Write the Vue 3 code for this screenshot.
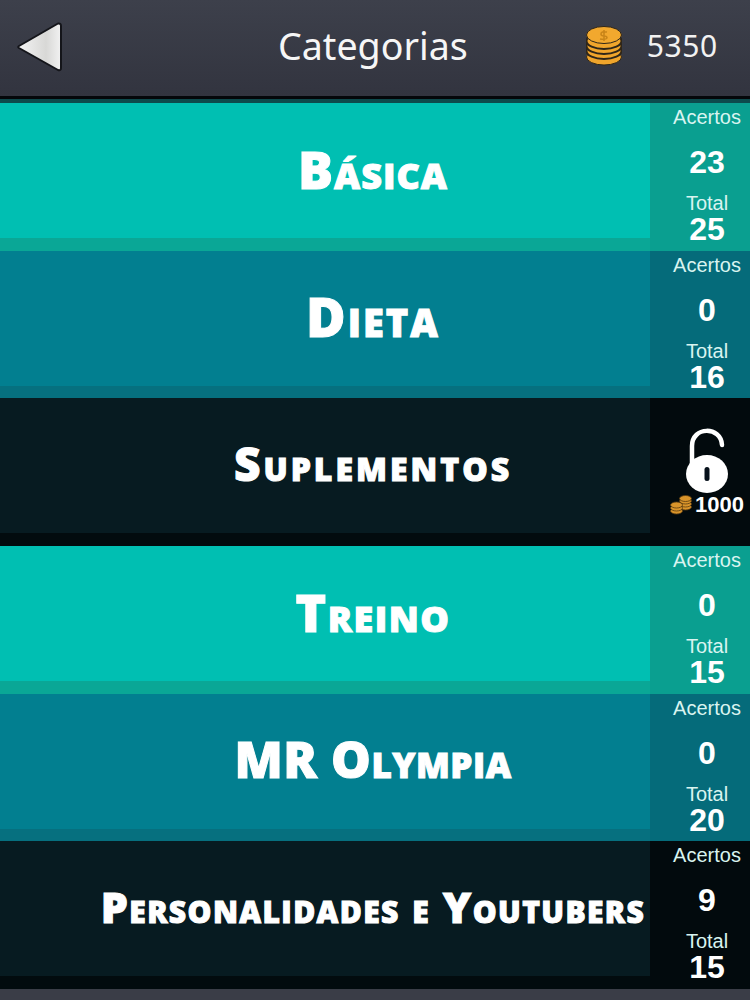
<template>
  <div class="screen">
    <header class="topbar">
      <button class="back" aria-label="Voltar">
        <svg width="48" height="50" viewBox="0 0 48 50">
          <defs>
            <linearGradient id="backFill" x1="0" y1="0" x2="1" y2="0">
              <stop offset="0" stop-color="#f4f4f4" />
              <stop offset="0.65" stop-color="#d8d8d6" />
              <stop offset="1" stop-color="#f2f2f2" />
            </linearGradient>
          </defs>
          <path d="M42 1.500 L3 24 Q1.500 25 3 26 L42 48 Q45 49 45 46 L45 4 Q45 1 42 1.500 Z" fill="url(#backFill)" stroke="#14151a" stroke-width="2" stroke-linejoin="round" />
        </svg>
      </button>
      <h1 class="heading">Categorias</h1>
      <div class="wallet">
        <svg class="coins" width="36" height="40" viewBox="0 0 36 40">
          <ellipse cx="18" cy="31" rx="17.500" ry="8" fill="#f0a52c" stroke="#2f2619" stroke-width="1" />
          <ellipse cx="18" cy="25" rx="17.500" ry="8" fill="#f0a52c" stroke="#2f2619" stroke-width="2" />
          <ellipse cx="18" cy="20" rx="17.500" ry="8" fill="#f0a52c" stroke="#2f2619" stroke-width="2" />
          <ellipse cx="18" cy="15" rx="17.500" ry="8" fill="#f0a52c" stroke="#2f2619" stroke-width="2" />
          <ellipse cx="18" cy="9" rx="17.500" ry="8.500" fill="#f2a82e" stroke="#2f2619" stroke-width="1" />
          <path d="M21 6 Q15 5 15 8 Q15 10 18 10 Q21 10 21 12 Q20 14 14 13 M18 4 V15" fill="none" stroke="#c98518" stroke-width="1.600" />
        </svg>
        <span class="balance">5350</span>
      </div>
    </header>

    <main class="list">
      <section v-for="cat in categories" :key="cat.name" class="row" :class="cat.tone">
        <div class="row-main">
          <div class="title-area">
            <h2 class="title" :class="cat.size">{{ cat.name }}</h2>
          </div>
          <div class="strip"></div>
        </div>
        <aside class="side">
          <template v-if="cat.locked">
            <div class="lock-box">
              <svg width="42" height="66" viewBox="0 0 42 66">
                <path d="M6 36 V18 C6 -2 35 -2 36 17" fill="none" stroke="#fff" stroke-width="4.500" stroke-linecap="round" />
                <ellipse cx="21" cy="46" rx="21" ry="19" fill="#fff" />
                <rect x="18.500" y="39" width="5" height="14" rx="2.500" fill="#06101a" />
              </svg>
              <div class="price">
                <svg width="22" height="20" viewBox="0 0 22 20">
                  <g fill="#d9942a" stroke="#5a3c10" stroke-width="0.800">
                    <ellipse cx="15.500" cy="12" rx="6" ry="3" />
                    <ellipse cx="15.500" cy="9" rx="6" ry="3" />
                    <ellipse cx="15.500" cy="6" rx="6" ry="3" />
                    <ellipse cx="15.500" cy="3.500" rx="6" ry="3" />
                    <ellipse cx="6.500" cy="16" rx="6" ry="3" />
                    <ellipse cx="6.500" cy="13" rx="6" ry="3" />
                    <ellipse cx="6.500" cy="10" rx="6" ry="3" />
                  </g>
                </svg>
                <span>1000</span>
              </div>
            </div>
          </template>
          <template v-else>
            <span class="label">Acertos</span>
            <strong class="value hits">{{ cat.hits }}</strong>
            <span class="label total">Total</span>
            <strong class="value count">{{ cat.total }}</strong>
          </template>
        </aside>
      </section>
    </main>
    <div class="bottom"></div>
  </div>
</template>

<script setup>
const categories = [
  { name: 'Básica', tone: 'green', size: 't-basica', hits: 23, total: 25 },
  { name: 'Dieta', tone: 'blue', size: 't-dieta', hits: 0, total: 16 },
  { name: 'Suplementos', tone: 'dark', size: 't-suple', locked: true },
  { name: 'Treino', tone: 'green', size: 't-treino', hits: 0, total: 15 },
  { name: 'MR Olympia', tone: 'blue', size: 't-olympia', hits: 0, total: 20 },
  { name: 'Personalidades e Youtubers', tone: 'dark', size: 't-person', hits: 9, total: 15 }
];
</script>

<style>
html, body {
  background: #01090b;
}
</style>

<style scoped>
.screen {
  width: 750px;
  height: 1000px;
  overflow: hidden;
  display: flex;
  flex-direction: column;
  font-family: "Liberation Sans", Arial, sans-serif;
  color: #fff;
}
.topbar {
  height: 96px;
  flex: none;
  display: flex;
  align-items: center;
  background: linear-gradient(#3d404b, #32343f);
  border-bottom: 3px solid #05070a;
  box-shadow: 0 4px 0 #0d4a4c;
  position: relative;
  z-index: 1;
  box-sizing: content-box;
}
.back {
  width: 48px;
  height: 50px;
  margin: -2px 0 0 16px;
  padding: 0;
  border: 0;
  background: none;
}
.back svg {
  display: block;
}
.heading {
  margin: -5px 0 0 214px;
  font: 400 37.600px "Noto Sans", sans-serif;
  color: #f6f6f6;
}
.wallet {
  display: flex;
  align-items: center;
  margin: -5px 0 0 118px;
}
.balance {
  margin-left: 25px;
  font: 400 30px "Noto Sans", sans-serif;
  letter-spacing: 0.600px;
  color: #f2f2f2;
}
.list {
  margin-top: 4px;
  flex: none;
}
.row {
  height: 147.700px;
  display: flex;
}
.row-main {
  width: 650px;
  display: flex;
  flex-direction: column;
}
.title-area {
  height: 135px;
  display: flex;
  align-items: center;
  justify-content: center;
  padding: 0 0 5px 96px;
  box-sizing: border-box;
}
.title {
  margin: 0;
  font-family: "Open Sans", sans-serif;
  font-weight: 800;
  font-variant: small-caps;
  color: #fff;
  white-space: nowrap;
  -webkit-text-stroke: 1px #fff;
}
.t-basica { font-size: 52px; letter-spacing: 1px; }
.t-dieta { font-size: 54px; letter-spacing: 2px; }
.t-suple { font-size: 46px; letter-spacing: 3px; }
.t-treino { font-size: 52px; letter-spacing: 1.500px; }
.t-olympia { font-size: 50px; letter-spacing: 0.500px; }
.t-person { font-size: 43px; letter-spacing: 1.400px; }
.strip {
  flex: 1;
}
.side {
  width: 100px;
  display: flex;
  flex-direction: column;
  align-items: center;
  box-sizing: border-box;
  padding: 4px 0 0 14px;
}
.label {
  font-size: 20px;
  line-height: 20px;
  color: #d9f4f0;
}
.value {
  font-size: 32px;
  line-height: 24px;
  font-weight: 700;
}
.hits {
  margin-top: 23px;
}
.total {
  margin-top: 19px;
}
.count {
  margin-top: 4px;
}
.green .title-area { background: #00bfb2; }
.green .strip { background: #0aa796; }
.green .side { background: #0a9f90; }
.blue .title-area { background: #027f90; }
.blue .strip { background: #06707f; }
.blue .side { background: #056b7a; }
.dark .title-area { background: #071b21; }
.dark .strip { background: #020b0e; }
.dark .side { background: #020a0d; }
.lock-box {
  display: flex;
  flex-direction: column;
  align-items: center;
  margin: 23px 0 0 -14px;
  width: 100px;
}
.lock-box > svg {
  margin: 3px 0 0 14px;
}
.price {
  display: flex;
  align-items: center;
  gap: 3px;
  margin: 1px 0 0 14px;
  font-size: 22px;
  line-height: 20px;
  font-weight: 700;
}
.bottom {
  flex: 1;
  background: #3a3d47;
}
</style>
